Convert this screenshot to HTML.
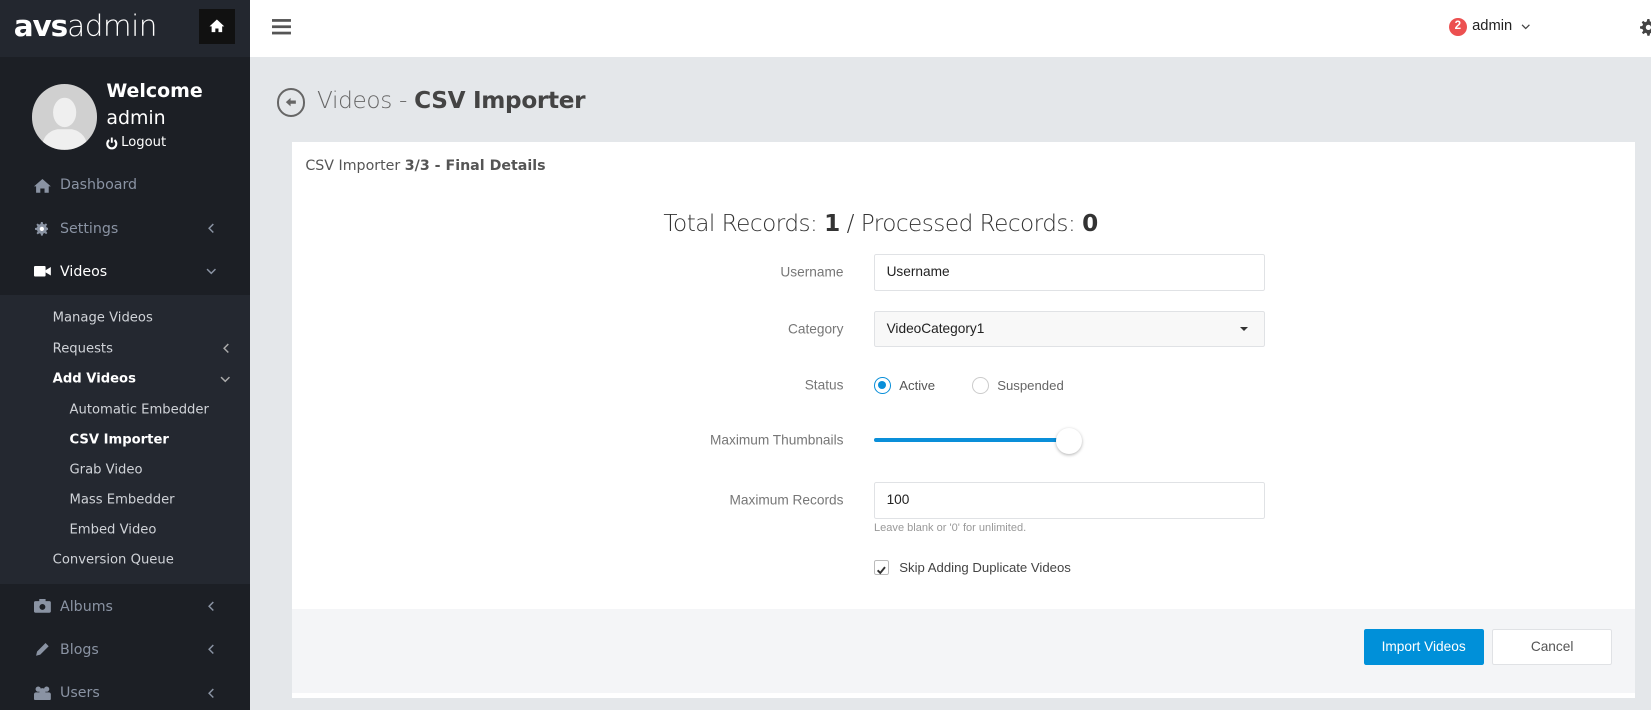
<!DOCTYPE html>
<html><head><meta charset="utf-8">
<style>
html{zoom:1.053}
*{box-sizing:border-box;margin:0;padding:0}
body{width:1568px;height:674px;overflow:hidden;background:#e4e7ea;font-family:"Liberation Sans",sans-serif;position:relative}
.a{position:absolute}
.sb{left:0;top:0;width:237px;height:674px;background:#1c1f25}
.sbh{left:0;top:0;width:237px;height:54px;background:#23272f}
.sub{left:0;top:280px;width:237px;height:275px;background:#242830}
.mi{left:57px;color:#8a93a3;transform:translateY(-50%);font-family:"DejaVu Sans","Liberation Sans",sans-serif;font-size:13.5px}
.si{font-size:12.5px;color:#d0d3d8;transform:translateY(-50%);font-family:"DejaVu Sans",sans-serif}
.chev{left:197px;transform:translateY(-50%)}
.lbl{right:767px;font-size:13px;color:#777;transform:translateY(-50%);text-align:right;white-space:nowrap}
.inp{left:830px;width:371px;height:35px;border:1px solid #e0e2e5;border-radius:2px;background:#fff;font-size:13px;color:#222;padding:0 11px;line-height:33px}
</style></head><body>
<div class="a sb"></div>
<div class="a sbh"></div>
<div class="a" style="left:13px;top:9px;color:#fff;font-size:28px;font-family:'DejaVu Sans',sans-serif;letter-spacing:-1px"><b>avs</b><span style="font-weight:200;font-family:'DejaVu Sans';letter-spacing:-0.5px;-webkit-text-stroke:0">admin</span></div>
<div class="a" style="left:189px;top:9px;width:34px;height:33px;background:#111"><svg width="34" height="33" viewBox="0 0 34 33"><path d="M17 10 L10 16.5 H12 V22 H15.5 V18.5 H18.5 V22 H22 V16.5 H24 Z" fill="#fff"/></svg></div>
<div class="a sub"></div>
<div class="a" style="left:30px;top:80px;width:62px;height:62px;border-radius:50%;background:#d0d0d0;overflow:hidden"><svg width="62" height="62"><ellipse cx="31" cy="27" rx="11" ry="14" fill="#efefef"/><path d="M9 62 Q10 46 24 43 H38 Q52 46 53 62Z" fill="#efefef"/></svg></div>
<div class="a" style="left:101px;top:76px;color:#fff;font-size:18px;font-weight:bold;font-family:'DejaVu Sans',sans-serif">Welcome</div>
<div class="a" style="left:101px;top:102px;color:#fff;font-size:18px;font-family:'DejaVu Sans',sans-serif">admin</div>
<svg class="a" style="left:101px;top:130px" width="11" height="12"><path d="M3 3 A4.3 4.3 0 1 0 8 3" fill="none" stroke="#fff" stroke-width="2"/><rect x="4.6" y="0.5" width="1.8" height="5" fill="#fff"/></svg>
<div class="a" style="left:115px;top:128px;color:#fff;font-size:12.5px;font-family:'DejaVu Sans',sans-serif">Logout</div>

<svg width="0" height="0" style="position:absolute"><defs>
<symbol id="cl" viewBox="0 0 8 10"><path d="M6 1 L2 5 L6 9" fill="none" stroke="currentColor" stroke-width="1.4"/></symbol>
<symbol id="cd" viewBox="0 0 10 8"><path d="M1 2 L5 6 L9 2" fill="none" stroke="currentColor" stroke-width="1.4"/></symbol>
<symbol id="gear" viewBox="0 0 16 16"><path d="M7 0h2l.4 2.2 1.6.7 1.8-1.3 1.4 1.4-1.3 1.8.7 1.6L16 7v2l-2.2.4-.7 1.6 1.3 1.8-1.4 1.4-1.8-1.3-1.6.7L9 16H7l-.4-2.2-1.6-.7-1.8 1.3-1.4-1.4 1.3-1.8-.7-1.6L0 9V7l2.2-.4.7-1.6-1.3-1.8 1.4-1.4 1.8 1.3 1.6-.7z" fill="currentColor"/><circle cx="8" cy="8" r="2.5" fill="#fff"/></symbol>
</defs></svg>

<svg class="a" style="left:32px;top:169px" width="16" height="14"><path d="M8 1 L0 8 H2 V14 H6 V10 H10 V14 H14 V8 H16Z" fill="#8a93a3"/></svg>
<div class="a mi" style="top:176px">Dashboard</div>
<svg class="a" style="left:33px;top:211px;color:#8a93a3" width="13" height="13"><use href="#gear"/></svg>
<div class="a mi" style="top:217px">Settings</div><svg class="a" style="left:197px;top:212px;color:#8a93a3" width="8" height="10"><use href="#cl"/></svg>
<svg class="a" style="left:32px;top:253px" width="16" height="10"><rect width="11" height="10" rx="1" fill="#fff"/><path d="M11 4 L16 1 V9 L11 6Z" fill="#fff"/></svg>
<div class="a mi" style="top:258px;color:#fff">Videos</div><svg class="a" style="left:196px;top:254px;color:#8a93a3" width="10" height="8"><use href="#cd"/></svg>

<div class="a si" style="left:50px;top:302px">Manage Videos</div>
<div class="a si" style="left:50px;top:331px">Requests</div><svg class="a" style="left:211px;top:326px;color:#aaa" width="8" height="10"><use href="#cl"/></svg>
<div class="a si" style="left:50px;top:360px;font-weight:bold;color:#fff">Add Videos</div><svg class="a" style="left:209px;top:356px;color:#aaa" width="10" height="8"><use href="#cd"/></svg>
<div class="a si" style="left:66px;top:389px">Automatic Embedder</div>
<div class="a si" style="left:66px;top:418px;font-weight:bold;color:#fff">CSV Importer</div>
<div class="a si" style="left:66px;top:446px">Grab Video</div>
<div class="a si" style="left:66px;top:475px">Mass Embedder</div>
<div class="a si" style="left:66px;top:503px">Embed Video</div>
<div class="a si" style="left:50px;top:532px">Conversion Queue</div>

<svg class="a" style="left:32px;top:569px" width="16" height="13"><rect y="2" width="16" height="11" rx="1.5" fill="#8a93a3"/><rect x="5" width="6" height="3" fill="#8a93a3"/><circle cx="8" cy="7.5" r="2.8" fill="#1c1f25"/></svg>
<div class="a mi" style="top:576px">Albums</div><svg class="a" style="left:197px;top:571px;color:#8a93a3" width="8" height="10"><use href="#cl"/></svg>
<svg class="a" style="left:33px;top:610px" width="14" height="14"><path d="M1 13 L2 9 L10 1 L13 4 L5 12Z" fill="#8a93a3"/></svg>
<div class="a mi" style="top:617px">Blogs</div><svg class="a" style="left:197px;top:612px;color:#8a93a3" width="8" height="10"><use href="#cl"/></svg>
<svg class="a" style="left:32px;top:651px" width="16" height="14"><circle cx="4" cy="3" r="2.5" fill="#8a93a3"/><circle cx="12" cy="3" r="2.5" fill="#8a93a3"/><circle cx="8" cy="5" r="3" fill="#8a93a3"/><rect x="0" y="6" width="16" height="8" rx="2" fill="#8a93a3"/></svg>
<div class="a mi" style="top:658px">Users</div><svg class="a" style="left:197px;top:653px;color:#8a93a3" width="8" height="10"><use href="#cl"/></svg>

<div class="a" style="left:237px;top:0;width:1331px;height:54px;background:#fff"></div>
<svg class="a" style="left:258px;top:17px" width="18" height="16"><rect y="1" width="18" height="2.6" fill="#555"/><rect y="7" width="18" height="2.6" fill="#555"/><rect y="13" width="18" height="2.6" fill="#555"/></svg>
<div class="a" style="left:1376px;top:17px;width:17px;height:17px;border-radius:50%;background:#ec5050;color:#fff;font-size:11px;font-weight:bold;text-align:center;line-height:17px">2</div>
<div class="a" style="left:1398px;top:17px;font-size:14px;color:#222">admin</div>
<svg class="a" style="left:1444px;top:22px;color:#444" width="9" height="7"><use href="#cd"/></svg>
<svg class="a" style="left:1557px;top:18px;color:#444" width="16" height="16"><use href="#gear"/></svg>

<div class="a" style="left:263px;top:84px;width:27px;height:27px;border:2px solid #666;border-radius:50%"><svg width="23" height="23"><path d="M6.5 11.5 L11 7.5 V10 H16 V13 H11 V15.5Z" fill="#666"/></svg></div>
<div class="a" style="left:301px;top:84px;font-size:22px;color:#666;font-family:'DejaVu Sans',sans-serif;font-weight:300;letter-spacing:-0.3px">Videos - <span style="color:#444;font-weight:700">CSV Importer</span></div>

<div class="a" style="left:277px;top:135px;width:1276px;height:528px;background:#fff"></div>
<div class="a" style="left:290px;top:150px;font-size:13.5px;color:#555;font-family:'DejaVu Sans',sans-serif">CSV Importer <b>3/3 - Final Details</b></div>
<div class="a" style="left:630px;top:200px;font-size:22px;color:#333;font-family:'DejaVu Sans',sans-serif;font-weight:200;letter-spacing:-0.5px;white-space:nowrap">Total Records: <span style="font-weight:700">1</span> / Processed Records: <span style="font-weight:700">0</span></div>

<div class="a lbl" style="top:258px">Username</div>
<div class="a inp" style="top:241px">Username</div>
<div class="a lbl" style="top:312px">Category</div>
<div class="a inp" style="top:295px;background:#f8f8f8">VideoCategory1<span style="position:absolute;right:15px;top:15px;border:4px solid transparent;border-top:4px solid #333;border-bottom:0"></span></div>
<div class="a lbl" style="top:366px">Status</div>
<div class="a" style="left:830px;top:358px;width:16px;height:16px;border:1.5px solid #0a8fd9;border-radius:50%"><div style="margin:2.5px;width:8px;height:8px;border-radius:50%;background:#0a8fd9"></div></div>
<div class="a" style="left:854px;top:359px;font-size:12.5px;color:#555">Active</div>
<div class="a" style="left:923px;top:358px;width:16px;height:16px;border:1px solid #ccc;border-radius:50%"></div>
<div class="a" style="left:947px;top:359px;font-size:12.5px;color:#666">Suspended</div>
<div class="a lbl" style="top:418px">Maximum Thumbnails</div>
<div class="a" style="left:830px;top:416px;width:185px;height:4px;border-radius:2px;background:#0a8fd9"></div>
<div class="a" style="left:1003px;top:406px;width:25px;height:25px;border-radius:50%;background:#fff;box-shadow:0 1px 3px rgba(0,0,0,.3)"></div>
<div class="a lbl" style="top:475px">Maximum Records</div>
<div class="a inp" style="top:458px">100</div>
<div class="a" style="left:830px;top:496px;font-size:10.5px;color:#999">Leave blank or '0' for unlimited.</div>
<div class="a" style="left:830px;top:532px;width:14px;height:14px;border:1px solid #bbb;border-radius:2px"><svg width="12" height="12"><path d="M2.5 6 L5 8.5 L9.5 3" fill="none" stroke="#333" stroke-width="1.8"/></svg></div>
<div class="a" style="left:854px;top:532px;font-size:12.5px;color:#444">Skip Adding Duplicate Videos</div>

<div class="a" style="left:277px;top:578px;width:1276px;height:80px;background:#f4f5f7"></div>
<div class="a" style="left:1295px;top:597px;width:114px;height:35px;background:#0090d9;border-radius:2px;color:#fff;font-size:13px;text-align:center;line-height:35px">Import Videos</div>
<div class="a" style="left:1417px;top:597px;width:114px;height:35px;background:#fff;border:1px solid #e0e2e5;border-radius:2px;color:#555;font-size:13px;text-align:center;line-height:33px">Cancel</div>
</body></html>
